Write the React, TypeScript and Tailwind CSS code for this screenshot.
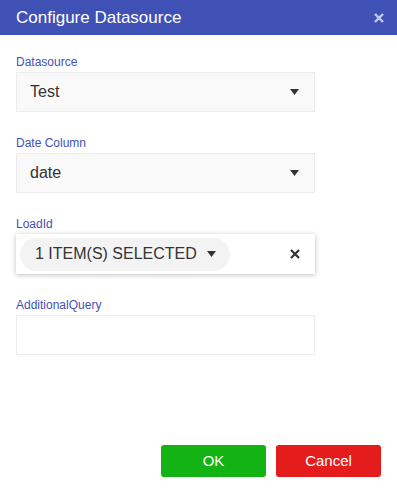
import React from "react";

const font = { fontFamily: '"Liberation Sans", Arial, sans-serif' };

function Caret() {
  return (
    <svg width="9" height="6" viewBox="0 0 9 6" className="shrink-0">
      <path d="M0 0h9L4.5 6z" fill="#333" />
    </svg>
  );
}

function Label({ children }: { children: React.ReactNode }) {
  return <div className="text-[12px] leading-[14px] text-[#3f51b5] mb-[3px]">{children}</div>;
}

function SelectBox({ value }: { value: string }) {
  return (
    <div className="flex items-center justify-between h-[40px] w-[299px] bg-[#f9f9f9] border border-[#ececec] pl-[13px] pr-[15px]">
      <span className="text-[16px] text-[#333]">{value}</span>
      <Caret />
    </div>
  );
}

export default function App() {
  return (
    <div className="w-[397px] h-[493px] bg-white flex flex-col" style={font}>
      <div className="h-[35px] bg-[#3f51b5] flex items-center justify-between pl-[16px] pr-[13px]">
        <span className="text-white text-[17px]">Configure Datasource</span>
        <svg width="10" height="10" viewBox="0 0 10 10">
          <path d="M1 1l8 8M9 1l-8 8" stroke="#c5cae9" strokeWidth="2.4" />
        </svg>
      </div>
      <div className="flex flex-col pl-[16px] pt-[20px]">
        <Label>Datasource</Label>
        <SelectBox value="Test" />
        <div className="h-[24px]" />
        <Label>Date Column</Label>
        <SelectBox value="date" />
        <div className="h-[24px]" />
        <Label>LoadId</Label>
        <div className="flex items-center justify-between h-[40px] w-[299px] bg-white shadow-[0_1px_5px_rgba(0,0,0,0.25)] pl-[4px] pr-[15px]">
          <div className="flex items-center h-[33px] w-[210px] rounded-full bg-[#f3f3f3] pl-[15px] gap-[10px]">
            <span className="text-[16px] text-[#333]">1 ITEM(S) SELECTED</span>
            <Caret />
          </div>
          <svg width="10" height="10" viewBox="0 0 10 10">
            <path d="M1 1l8 8M9 1l-8 8" stroke="#333" strokeWidth="2.2" />
          </svg>
        </div>
        <div className="h-[24px]" />
        <Label>AdditionalQuery</Label>
        <div className="h-[40px] w-[299px] bg-white border border-[#ececec]" />
      </div>
      <div className="flex justify-end gap-[10px] pr-[16px] mt-auto mb-[16px]">
        <button className="w-[105px] h-[32px] rounded-[3px] bg-[#12b312] text-white text-[15px]">OK</button>
        <button className="w-[105px] h-[32px] rounded-[3px] bg-[#e51c1c] text-white text-[15px]">Cancel</button>
      </div>
    </div>
  );
}
